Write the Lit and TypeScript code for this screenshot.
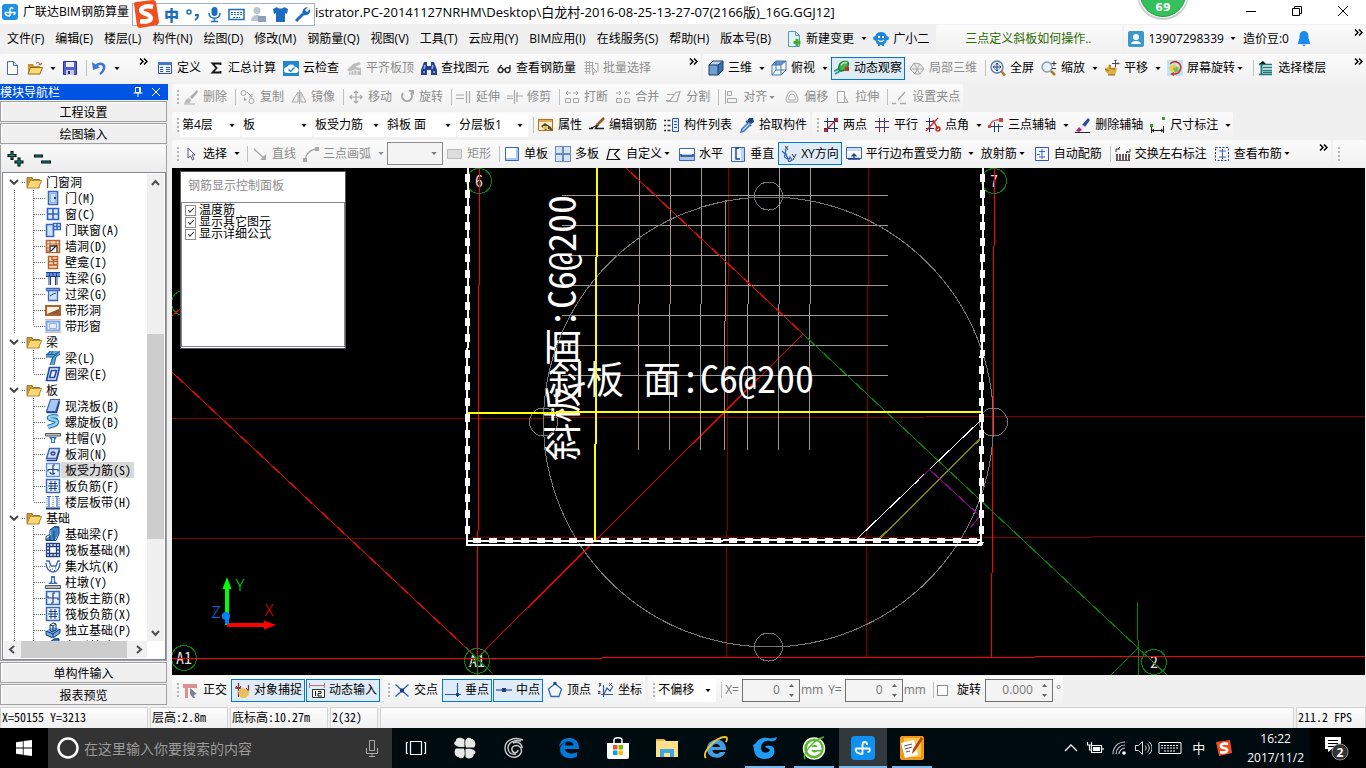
import { LitElement, html, svg, css, nothing } from "lit";
import { customElement } from "lit/decorators.js";
import { classMap } from "lit/directives/class-map.js";

const s = (d: string, c: string, w = 1, f = "none") =>
  svg`<path d=${d} stroke=${c} stroke-width=${w} fill=${f}></path>`;
const f = (d: string, c: string) => svg`<path d=${d} fill=${c}></path>`;

const G = "#a8a8a8";
const B = "#3a66b8";
const N = "#1f3f86";
const O = "#b8642c";
const L = "#cfe0fa";

const ICONS: Record<string, unknown> = {
  new: [s("M3.5 1.5h6l4 4v9h-10z", "#4a6a9a", 1, "#fff"), s("M9.5 1.5v4h4", "#4a6a9a", 1, "#dce8f8")],
  open: [f("M1 4h5l1 2h6v8H1z", "#c98f28"), f("M3 7h13l-3 7H1z", "#ffd977"), s("M1 14L3.5 7.500H15.500L13 14zM9 3.500c2-2 4-1 4.500 1.500M15 3l-1.500 2-2-1", "#8d6a24")],
  save: [s("M1.500 1.500h13v13h-13z", "#2c2c9c", 1, "#5560d0"), f("M4 2h8v5H4z", "#eef"), f("M4 10h8v5H4z", "#c8c8d8"), f("M6 11h2v3H6z", "#2c2c9c")],
  undo: [s("M5 5.500c4-3.500 9-1.500 8 3-.5 2.500-2 4-4 5.500", "#3a78d8", 2.500), f("M1 2l1 8 7-2.500z", "#3a78d8")],
  define: [s("M1.500 2.500h13v11h-13z", "#3a5a8a", 1, "#e6effc"), f("M1 2h14v3H1z", "#4a78c8"), s("M3 7.500h3M3 9.500h3M3 11.500h3M9 7.500h4M9 9.500h4M9 11.500h4", "#3a5a8a")],
  sigma: [s("M12.500 5V3.500h-8L8.500 8l-4 4.500h8V11", "#111", 1.800)],
  cloud: [f("M0 1h16v15H0z", "#1e88d0"), f("M4 13a3 3 0 0 1 0-6 4.500 4.500 0 0 1 8 0 3 3 0 0 1 1 6z", "#fff"), s("M5.500 9.500l2 2 4-4", "#1e88d0", 1.400)],
  align: [f("M1 10l6-6 6-2 2 2-6 3 6 1v7H3v-4z", "#bcbcbc"), s("M3 12l6-2 5 1M5 15v-3M8 15v-4M11 15v-4", "#eee")],
  find: [f("M3 2h3v4h4V2h3l3 8v5h-6v-5H6v5H0v-5z", "#24418c"), s("M3 9l1-4M11 9l1-4M2 12h2M12 12h2", "#8fb0e8", 1.500)],
  glass: [s("M2 10a2.500 2.500 0 1 0 5 .1 2.500 2.500 0 1 0-5-.1M9 10a2.500 2.500 0 1 0 5 .1 2.500 2.500 0 1 0-5-.1M7 9.500h2M2.500 9l3-4M14 9V5", "#222", 1.300)],
  batch: [s("M1.500 2.500h9M1.500 5.500h9M1.500 8.500h6M1.500 11.500h6M3.500 1v13M6.500 1v13M9.500 2v5", G), s("M9 7l5 5h-3l-1 3zM12 3.500h3v8", G)],
  cube: [f("M1 5h9v10H1z", "#6f9fd0"), f("M1 5l4-4h10l-5 4z", "#b8d4f0"), f("M10 5l5-4v9l-5 5z", "#3f6fa8"), s("M1 5h9v10H1zL5 1h10v9l-5 5M10 5l5-4", "#1d3c66")],
  topview: [f("M1 5h9v10H1z", "#eef5ff"), f("M1 5l4-4h10l-5 4z", "#5c94d0"), s("M1 5h9v10H1zL5 1h10v9l-5 5M10 5l5-4M5 1v9l-4 5M5 10h10", "#4a78b0")],
  orbit: [s("M0 11l7-3M1 14l7-4", "#2aa0a0", 2), s("M5 6c1-5 9-6 9.500-3s-3 8-7 8-3-3-2.500-5z", "#1d7a2a", 1.300, "#45b050"), s("M7 5c2-3 5-3 6-2", "#c0f0c0", 1.500), f("M11 7h4v4h-4z", "#c03020")],
  part3d: [s("M1 9l4-6 6 1 4 5-4 5H6zM5 3l3 6-2 5M11 4L8 9l3 5M1 9h14", G, 1, "#ececec")],
  full: [s("M1 7a6 6 0 1 0 12 0A6 6 0 1 0 1 7", "#5a7aa8", 1.300, "#e8f2ff"), s("M7 3v8M3 7h8M5.500 4.500L7 3l1.500 1.500M5.500 9.500L7 11l1.500-1.500M4.500 5.500L3 7l1.500 1.500M9.500 5.500L11 7 9.500 8.500", "#1f3f86"), s("M11.500 11.500l3.500 4", "#b07830", 2.500)],
  zoom: [s("M1 7a5 5 0 1 0 10 0A5 5 0 1 0 1 7", "#8898a8", 1.300, "#e8f2ff"), s("M10 11l4 4", "#b07830", 2.500), s("M13 1v5M10.500 3.500h5M11 8.500h4", "#333")],
  pan: [f("M1 8l3-1 1-3 2 1v3l5-1 1 2-2 6H5l-4-4z", "#e0b048"), s("M4 15h7M1 9l4 2M6 5v4M8 8v2M10 8v2", "#8a6018"), s("M11.500 0v7M8 3.500h7M10.500 1l1-1 1 1M14 2.500l1 1-1 1", "#445")],
  rot: [f("M0 0h16v16H0z", "#bfe4f4"), f("M2 7l5-3 5 4-3 4-6-1z", "#e8d048"), f("M6 8l5-1 1 4-4 2z", "#7ab858"), s("M3 4c5-5 12-1 10.500 5-1 4-4 5.500-7.500 5", "#d03028", 1.500), f("M7 12v4l-4-2z", "#d03028")],
  floor: [f("M5 1l3 3H1z", "#111"), s("M1 4.500h13M5 7.500h9M5 10.500h9M1 14.500h13M5 12.500h9", "#1a7a7a", 1.500), s("M3.500 5v9", "#1a7a7a", 2)],
  brush: [f("M14 1l1 2-6 7-2-2z", G), f("M2 13c1-4 4-5 6-2 0 3-3 4-7 3z", "#bbb"), s("M1 15h11", G)],
  copy: [s("M1 4a2.500 2.500 0 1 0 5 0 2.500 2.500 0 1 0-5 0M9 12a2.500 2.500 0 1 0 5 0 2.500 2.500 0 1 0-5 0M7 3l5 5M12 5v3H9", G), f("M4 8l3 3-3 1z", G)],
  mirror: [s("M7 3v10H1zM8.500 1v14M10 3v10h5z", G)],
  move: [s("M8 2v12M2 8h12M6 4l2-2 2 2M6 12l2 2 2-2M4 6L2 8l2 2M12 6l2 2-2 2", G, 1.200)],
  rotate: [s("M4 4a5 5 0 1 0 8 0", G, 2), f("M9 1h6v5z", G)],
  extend: [s("M0 6h8M0 9.500h8", G), s("M10.500 2v12M13.500 2v12", G, 1.200)],
  trim: [s("M0 7h6M0 9.500h6M9 7h7M7.500 1v14M10 3v10", G, 1.200)],
  breakk: [s("M1.500 9.500h5v4h-5zM9.500 9.500h5v4h-5zM7 4H2l2-2M2 4l2 2M9 4h5l-2-2M14 4l-2 2", G)],
  merge: [s("M1.500 9.500h5v4h-5zM9.500 9.500h5v4h-5zM1 4h5L4 2M6 4L4 6M15 4h-5l2-2M10 4l2 2", G)],
  split: [s("M1 5.500h8M0 11.500h4l6-8 4-1-3 10H2z", G, 1.200)],
  alignl: [s("M2.500 1v14M4.500 2.500h4v4h-4zM4.500 9.500h9v4h-9z", G)],
  offset: [s("M8 2c5 0 7 10 5 11H3C1 12 3 2 8 2zM8 5c3 0 4 5 3 6H5c-1-1 0-6 3-6z", G)],
  stretch: [s("M2.500 2.500h7v11h-7zM9 6l4 7.500H7", G)],
  grip: [s("M0 14.500h4M8 14.500h6M6 11l7-8", G, 1.500)],
  prop: [f("M0 2h15v5H0z", "#d8892c"), s("M.5 2.500h14v11H.5z", "#b87018", 1, "#fdf2d8"), f("M1 3h13v2H1z", "#e8a850"), f("M3 9l4-3 6 4 2 4-5-2-3 1z", "#5a4a20"), f("M5 9h5v3H5z", "#e0c060")],
  editbar: [s("M0 11.500h4M7 11.500h8", "#222", 1.500), s("M2 11c3 0 6-4 7-3l-3 4", "#222", 1.300), s("M8 8l7-7", "#8a5a2a", 2.500)],
  list: [s("M0 3.500h2M0 8.500h2M0 13.500h2M3.500 3.500h3M3.500 8.500h3M3.500 13.500h3", "#333", 1.500), s("M8.500 1.500h6v13h-6z", "#2c56b0", 1, "#e4eefc"), s("M10 4.500h3M10 7.500h3M10 10.500h3", "#2c56b0")],
  pick: [f("M10 1l4 0 1 4-3 2-4-3z", "#1f3f86"), s("M7 4l5 5", "#1f3f86", 1.500), s("M9 6L3 12l-1 3 3-1 6-6", "#3a78c8", 1.500, "#cfe8ff")],
  twopt: [s("M1 4.500h14M1 11.500h14M4.500 1v14M11.500 1v14", "#1f2f66"), s("M2 14L14 2", "#b8282c", 1.300), f("M1 12h3v3H1zM12 1h3v3h-3z", "#b8282c")],
  para: [s("M1 4.500h14M1 10.500h14", "#1f3f86"), s("M5.500 1v14M10.500 1v14", "#7a2c3c")],
  ptang: [s("M1 4.500h9M1 11.500h8M4.500 1v14", "#1f2f66"), s("M1 14L13 1", "#c8282c", 1.300), s("M8 3l5 9M11 12a2 2 0 1 0 4 0 2 2 0 1 0-4 0", "#c8282c", 1.500)],
  arcax: [s("M1 9.500h14M6.500 5v10M10.500 7v8", "#1f3f66"), s("M2 10c0-5 4-8 10-7", "#c84848", 1.300), f("M11 1h4v4h-4zM0 8h3v3H0z", "#c84848")],
  erase: [f("M13 1l2 2-5 7-3-2z", "#2c4a9a"), f("M8 8l2 2-4 4-3-3z", "#e8e8f0"), f("M4 10l3 3-3 2-3-1z", "#b02878"), s("M0 15.500h15", "#222")],
  dim: [f("M12 0h3v3h-3zM0 7h3v3H0z", "#30a030"), s("M1.500 10v6M13.500 9v7M2 13.500h11M4 12l-2 1.500L4 15M11 12l2 1.500-2 1.500", "#222")],
  cursor: [s("M5 2v10l2.500-2 2 4 1.500-1-2-4h3z", "#4a5a78", 1, "#fff")],
  line: [s("M2 3l11 10", G, 1.300), f("M14 8v6H8z", G)],
  arc: [s("M2 14C3 8 6 4 13 3", G, 1.300), f("M12 1h4v4h-4zM0 12h4v4H0z", G)],
  rect: [s("M.5 3.500h14v9H.5z", "#bbb", 1, "#ddd")],
  slab1: [s("M1.500 1.500h13v13h-13z", B, 1, "#fff"), f("M2 12h12v2H2zM12 2h2v12h-2z", "#a8c8f4")],
  slab4: [f("M0 0h16v16H0z", "#6a88b8"), f("M1 1h6v6H1zM9 1h6v6H9zM1 9h6v6H1zM9 9h6v6H9z", "#d4e4f8")],
  custom: [s("M1 13.500L3.500 3.500h9.500L8.500 8l5 5.500z", "#111", 1.200)],
  horiz: [s("M.5 2.500h15v12H.5z", B, 1, "#a8c8f0"), f("M1 3h14v5H1z", "#fff"), s("M2 8v2h4M14 8v2h-4M6 10h4", N, 1.300)],
  vert: [s("M1.500 1.500h13v14h-13z", B, 1, "#eef4ff"), s("M9 2H6v11h4", N, 1.400), f("M11 2h3v13h-3z", "#b8d4f8")],
  xy: [s("M1 5l3 3 1-4M5 8c-3 2-1 5 3 5l1-2 2 3-3 2z", B, 1.300), s("M4 0l3 4M7 0L4 4M11 8l2 3M15 8l-3 6", "#333")],
  edge: [s("M.5 1.500h15v11H.5z", B, 1, "#c8dcf8"), f("M1 5h14v6H1z", "#fff"), s("M2 13h12M8 13V8M5.500 10.500L8 8l2.500 2.500", N, 1.300)],
  auto: [s("M1.500 1.500h13v13h-13z", "#3a50c0", 1, "#f4f8ff"), s("M8 3v10M5 5.500h6M5 11h6M3 8.500h3", "#3a66d0")],
  swap: [s("M1 6V3h4M15 3v3h-4M3 3l2-2M13 5l-2 2", "#333"), f("M1 8h14v7H1z", "#6b5a5a"), s("M3.500 8v6M6.500 8v6M9.500 8v6M12.500 8v6", "#fff")],
  viewbar: [svg`<rect x="1.500" y="1.500" width="13" height="13" fill="none" stroke="#223a80" stroke-dasharray="2 1.500"></rect>`, s("M8.500 3v10M5 5h7M5 11h7", B)],
  doc: [s("M2.500.5h7l4 4v11h-11z", "#5a9ab8", 1, "#e0f4fa"), s("M9.500.5v4h4", "#5a9ab8"), s("M11 8v7M7.500 11.500h7", "#4aa828", 3)],
  bot: [f("M8 1c3 0 5 1 5.500 4L16 6l-.5 3-2 .5C13 12 12 13 11 13v2H9v-1H7v1H5v-2c-1 0-2-1-2.500-3.500l-2-.5L0 6l2.500-1C3 2 5 1 8 1z", "#1e88d8"), f("M5 5h2v2H5zM9 5h2v2H9z", "#fff"), s("M5 9c2 2 4 2 6 0", "#e0f4ff", 1.200)],
  user: [f("M0 2q0-2 2-2h12q2 0 2 2v12q0 2-2 2H2q-2 0-2-2z", "#3c98c8"), f("M5 6a3 3 0 1 1 6 0 3 3 0 1 1-6 0M3 13c0-4 10-4 10 0z", "#fff")],
  bell: [f("M8 0c4 0 4.500 3 4.500 7l1.500 5v1H2v-1l1.500-5c0-4 .5-7 4.500-7zM6 13.500h4l-2 2z", "#1e8af0")],
  logo: [svg`<rect width="16" height="16" rx="3" fill="#1e90ea"></rect>`, s("M11 5c-.5-2-3-1.500-3 .5V12M3 8.500h10c0 1.500-.5 2-1.500 2M3 8.500c0 2.500 2 3.500 5 3.500", "#fff", 1.400)],
  ortho: [f("M0 2h14v4H5v10H2V6H0z", "#dc9090"), f("M7 6l7 6-3 1 1 3-2 0-3-4z", "#7a8498")],
  snap: [s("M1 6h6M4.500 1v14M14.500 3v6", "#8a2c2c", 1.300), f("M4 9l4-3 7 2v5l-4 3H7l-2-3z", "#e8c060"), s("M2 4l2.500 3L7 4M12 6l2.500 3", "#8a2c2c")],
  dyn: [s("M0 3.500h16M.5 1v5M15.500 1v5", "#c07070"), s("M3.500 7.500h12v8h-12z", "#333", 1, "#f8f8f8"), s("M6.500 9v5M9 9.500h3v2H9v2.500h4", "#111")],
  cross: [s("M1.500 2.500l13 12M14.500 2.500l-13 12", "#2a6ab8", 1.400), f("M6 6.500h4v4H6z", N)],
  perp: [s("M0 12.500h16M12.500 1v14", "#2a5aa8", 1.200), f("M11 11h3v3h-3z", N)],
  mid: [s("M0 8h16", "#4a6ab8", 1.500), f("M6 6h4v4H6z", N)],
  vertex: [s("M8 1.500l6.500 5.500-2.500 7.500H4L1.500 7z", "#2a6ab8", 1.300), f("M6.500 0h3v3h-3z", N)],
  coord: [s("M5.500 3v12M3 12.500h12M6 12l3-6 3 3 3-5", "#2a5aa8", 1.200), s("M1 1l2 3M3 1L1 5M11 1l3 3M14 1l-3 3M0 9.500h2v2H0z", "#445")],
  folder: [f("M1 3h5l1 2h7v9H1z", "#c8983a"), f("M4 6h12l-3 8H1z", "#ffd873"), s("M1 13.500V3.500h5l1 2h6.500", "#9a7830"), s("M4 6.500h11.500l-3 7.500H1z", "#b08a38")],
  door: [s("M3.500 1.500h9v13h-9z", B, 1.600, L), s("M5.500 3.500h5v9h-5z", "#8fb4ec"), f("M9 7h2v2H9z", N)],
  win: [s("M2.500 2.500h11v11h-11zM8 3v10M3 8h10", "#2f62c4", 1.600, "#dbe9ff")],
  dw: [s("M1.500 2.500h7v12h-7z", B, 1.600, L), s("M8.500 1.500h7v6h-7zM12 2v5M9 4.500h6", "#2f62c4", 1.400, "#fff")],
  hole: [s("M1.500 2.500h13v12h-13z", O, 1.600, "#f6dfc6"), s("M1 6h14M5 2v4M11 2v4M2 10h2M2 13h2", O), s("M5 14V8h7v6M6 13l6-6", "#3a2a20", 1.300, "#fff")],
  niche: [s("M3.500 2.500h9v3h-4v5h4v4h-9zM12.500 5v6M4 7.500h8M4 11h8M7 3v3", O, 1.500, "#f6dfc6")],
  beamc: [f("M1 2h14v5H1z", "#5d8fe0"), s("M1 2.500h14M1 6.500h14M4 7v8M12 7v8M5.500 7v8M10.500 7v8M4.500 3v3M8 3v3M11.500 3v3", N)],
  lintel: [f("M1 2h14v3H1z", "#5d8fe0"), s("M1.500 2.500h13v2h-13zM3.500 5v9.500h9V5", B, 1.300, L), s("M5 10l3-2 3-1", N)],
  strip1: [f("M0 3h16v11H0z", "#b06028"), f("M2 5h12v7H2z", "#fbf0e4"), f("M2 12l12-5v5z", "#8a5a34")],
  strip2: [s("M0 1.500h16M0 14.500h16", "#f0b0a0"), s("M1.500 3.500h13v9h-13z", "#7fa4e4", 2, "#e4eeff"), s("M4.500 5.500h7v5h-7z", "#8fb0e8")],
  beam: [f("M1 4l4-3h10v3l-4 3-2 8H5l2-8H1z", "#58a8dc"), s("M1 4.500h9l5-3M1 7h7l4-3M5 15l3-8M9 15l2-8 4-3M3 4l2-3M6 4l2-3", "#1f5c98")],
  ring: [s("M4.500 1.500h10l-3 13h-10zM6.500 4.500h5l-2 7h-5z", "#1f4aa8", 1.600, "#e8f0ff")],
  slab: [s("M5.500 1.500h9l-4 12h-9z", B, 1.200, "#a9c8f5"), s("M1.500 14.500h10l3-11", N, 1.500)],
  spiral: [s("M13 3c-4-1-9-1-9 1s8 1 8 4-4 3-9 5", "#1f6cb0", 4.500), s("M13 3c-4-1-9-1-9 1s8 1 8 4-4 3-9 5", "#8fd4f4", 2.500)],
  cap: [s("M.5 3.500h15v2.500H.5z", "#555", 1, "#bbb"), f("M4 7h8l-2 3v3H6v-3z", "#3a6cc8"), f("M7 8h2v4H7z", "#cfe0fa")],
  shole: [s("M4.500 2.500h10l-3 10h-10z", B, 1.400, L), s("M6 7.500c0-2 4-2 4 0s-4 2-4 0M1.500 14.500h10l3-10", N, 1.300)],
  rebar: [s("M1.500 1.500h13v13h-13z", "#6a92d8", 1.400, "#e6f0ff"), s("M8 3v9M3 7.500h10v2M3 7.500v2M5 10c0 2 3 3 5 1M8 3h2", "#1f4488", 1.200)],
  rebar2: [s("M1.500 1.500h13v13h-13z", B, 1.400, "#e6f0ff"), s("M6 3v10M10 3v10M3 8h10M4 5.500h8M4 10.500h8", "#1f4488")],
  band: [s("M1 14.500h14", N, 2), s("M2 2.500h4M10 2.500h4M4 3v10M12 3v10", "#3a6cc8", 1.200), svg`<path d="M2 4v9M8 2v11M14 4v9" stroke="#3a6cc8" stroke-dasharray="1 1"></path>`],
  fbeam: [f("M1 13l5-4V3l4-3h4v7l-4 7H1z", "#3a86c8"), s("M1 14.500v-4l4-2V4l4-3h5v7l-3 6.500zM9 5v9M5 9v5", "#123c74")],
  raft: [s("M1.500 1.500h13v13h-13zM4.500 1v14M11.500 1v14M1 4.500h14M1 11.500h14M8 1v3M8 12v3M1 8h3M12 8h3", N, 1.300)],
  pit: [s("M1 3h3l2 5h5l2-5h2", B, 1.400), s("M1 5c0 5 3 9 7 9s7-4 7-9", B, 1.400), s("M4 9h1M7 11h1M10 10h1M5 12h1M9 12.500h1", N)],
  pier: [s("M.5 11.500h15v3H.5z", "#555", 1, "#bbb"), f("M3 10l3-3V2h4v5l3 3z", "#3a6cc8"), f("M7 4h2v5H7z", "#cfe0fa")],
  rmain: [s("M1.500 1.500h13v13h-13z", B, 1.600, "#e6f0ff"), s("M8 3v10M3 8h10M3 6v2M13 8v2M8 3h2M8 13H6", N, 1.200)],
  indep: [f("M1 9l7-4 7 2v4l-7 5-7-3z", "#78a8d8"), s("M1 9l7 3 7-5M8 12v3M1 9v4l7 3 7-5V7M5 8V3l3-2 3 1v6l-4 2zM5 3l3 1v5M8 4l3-2", "#123c74")],
};

const icon = (n: string) => html`<svg class="i" viewBox="0 0 16 16" aria-hidden="true">${ICONS[n]}</svg>`;

type Item = { i?: string; t?: string; off?: boolean; on?: boolean; drop?: "split" | "tight"; sep?: boolean; label?: string };
const T = (i: string, t: string, o: Partial<Item> = {}): Item => ({ i, t, ...o });
const SEP: Item = { sep: true };
const off = { off: true };

const tri = html`<svg class="tri" viewBox="0 0 7 4" aria-hidden="true"><path d="M0 0h7L3.500 4z" fill="currentColor"></path></svg>`;
const more = html`<button class="more" aria-label="更多"><svg viewBox="0 0 9 7"><path d="M1 .5l3 3-3 3M5 .5l3 3-3 3" fill="none" stroke="#000" stroke-width="1.500"></path></svg></button>`;

const item = (x: Item) =>
  x.sep
    ? html`<span class="sep"></span>`
    : html`<button class=${classMap({ tb: true, off: !!x.off, on: !!x.on })} aria-label=${x.label ?? x.t ?? ""}>
          ${x.i ? icon(x.i) : nothing}${x.t ? html`<span>${x.t}</span>` : nothing}${x.drop === "tight" ? html`<span class="tight">${tri}</span>` : nothing}</button
        >${x.drop === "split" ? html`<button class=${classMap({ arrow: true, off: !!x.off })} aria-label="展开">${tri}</button>` : nothing}`;

const combo = (label: string, v: string, cls = "") =>
  html`<label class="combo ${cls}"><select aria-label=${label}><option>${v}</option></select>${tri}</label>`;

const MENUS = ["文件(F)", "编辑(E)", "楼层(L)", "构件(N)", "绘图(D)", "修改(M)", "钢筋量(Q)", "视图(V)", "工具(T)", "云应用(Y)", "BIM应用(I)", "在线服务(S)", "帮助(H)", "版本号(B)"];

const QUICK: Item[] = [{ i: "new", label: "新建" }, { i: "open", label: "打开", drop: "split" }, { i: "save", label: "保存" }, SEP, { i: "undo", label: "撤销", drop: "split" }];
const MAIN: Item[] = [T("define", "定义"), T("sigma", "汇总计算"), T("cloud", "云检查"), T("align", "平齐板顶", off), T("find", "查找图元"), T("glass", "查看钢筋量"), T("batch", "批量选择", off)];
const VIEW: Item[] = [
  T("cube", "三维", { drop: "split" }), T("topview", "俯视", { drop: "split" }), T("orbit", "动态观察", { on: true }), T("part3d", "局部三维", off), SEP,
  T("full", "全屏"), T("zoom", "缩放", { drop: "split" }), T("pan", "平移", { drop: "split" }), T("rot", "屏幕旋转", { drop: "tight" }), SEP, T("floor", "选择楼层"),
];
const EDIT: Item[] = [
  T("brush", "删除", off), SEP, T("copy", "复制", off), T("mirror", "镜像", off), SEP, T("move", "移动", off), T("rotate", "旋转", off), SEP,
  T("extend", "延伸", off), T("trim", "修剪", off), SEP, T("breakk", "打断", off), T("merge", "合并", off), T("split", "分割", off), SEP,
  T("alignl", "对齐", { off: true, drop: "tight" }), T("offset", "偏移", off), T("stretch", "拉伸", off), SEP, T("grip", "设置夹点", off),
];
const COMP: Item[] = [SEP, T("prop", "属性"), T("editbar", "编辑钢筋"), T("list", "构件列表"), T("pick", "拾取构件")];
const AXIS: Item[] = [
  T("twopt", "两点"), T("para", "平行"), T("ptang", "点角", { drop: "split" }), T("arcax", "三点辅轴", { drop: "split" }), T("erase", "删除辅轴"), T("dim", "尺寸标注", { drop: "split" }),
];
const DRAW1: Item[] = [T("cursor", "选择", { drop: "split" }), SEP, T("line", "直线", off), T("arc", "三点画弧", { off: true, drop: "split" })];
const DRAW2: Item[] = [
  T("rect", "矩形", off), SEP, T("slab1", "单板"), T("slab4", "多板"), T("custom", "自定义", { drop: "tight" }), T("horiz", "水平"), T("vert", "垂直"),
  T("xy", "XY方向", { on: true }), T("edge", "平行边布置受力筋", { drop: "split" }), { t: "放射筋", drop: "tight" }, T("auto", "自动配筋"), SEP,
  T("swap", "交换左右标注"), T("viewbar", "查看布筋", { drop: "tight" }),
];
const SNAP1: Item[] = [T("ortho", "正交"), T("snap", "对象捕捉", { on: true }), T("dyn", "动态输入", { on: true })];
const SNAP2: Item[] = [T("cross", "交点"), T("perp", "垂点", { on: true }), T("mid", "中点", { on: true }), T("vertex", "顶点"), T("coord", "坐标")];

const TREE: [string, [string, string][]][] = [
  ["门窗洞", [["door", "门(M)"], ["win", "窗(C)"], ["dw", "门联窗(A)"], ["hole", "墙洞(D)"], ["niche", "壁龛(I)"], ["beamc", "连梁(G)"], ["lintel", "过梁(G)"], ["strip1", "带形洞"], ["strip2", "带形窗"]]],
  ["梁", [["beam", "梁(L)"], ["ring", "圈梁(E)"]]],
  ["板", [["slab", "现浇板(B)"], ["spiral", "螺旋板(B)"], ["cap", "柱帽(V)"], ["shole", "板洞(N)"], ["rebar", "板受力筋(S)"], ["rebar2", "板负筋(F)"], ["band", "楼层板带(H)"]]],
  ["基础", [["fbeam", "基础梁(F)"], ["raft", "筏板基础(M)"], ["pit", "集水坑(K)"], ["pier", "柱墩(Y)"], ["rmain", "筏板主筋(R)"], ["rebar2", "筏板负筋(X)"], ["indep", "独立基础(P)"], ["fbeam", "条形基础(T)"]]],
];

const dots = (d: string) => svg`<path d=${d} fill="none" stroke="#666" stroke-dasharray="1 1"></path>`;

@customElement("cad-canvas")
class CadCanvas extends LitElement {
  static styles = css`
    :host { display: block; background: #000; overflow: hidden; }
    svg { display: block; width: 100%; height: 100%; }
    .note { font-family: "Noto Sans Mono CJK SC", "Noto Sans CJK SC", sans-serif; font-size: 38px; fill: #fff; white-space: pre; }
    .ax { font-family: "Noto Sans Mono CJK SC", "Liberation Mono", monospace; font-size: 16px; fill: #ddd; text-anchor: middle; }
    .uc { font-family: "Open Sans", sans-serif; font-weight: 300; font-size: 16px; text-anchor: middle; }
  `;
  private l(x1: number, y1: number, x2: number, y2: number, c: string, w = 1) {
    return svg`<line x1=${x1} y1=${y1} x2=${x2} y2=${y2} stroke=${c} stroke-width=${w}></line>`;
  }
  render() {
    const wire = "#a09890";
    const l = this.l;
    const bubble = (x: number, y: number, t: string) => svg`
      <circle cx=${x} cy=${y} r="12.500" fill="none" stroke="#008a00"></circle>
      <text class="ax" x=${x} y=${y + 6}>${t}</text>`;
    const vbar = (x1: number, x2: number, y2: number) => svg`
      ${l(x1, 166, x2, y2, "#fff", 2)}
      <line x1=${x1} y1="174" x2=${x2} y2=${y2} stroke="#fff" stroke-width="5" stroke-dasharray="8 8"></line>`;
    return html`<svg aria-label="绘图区">
      <g transform="translate(-172 -168)" shape-rendering="crispEdges">
        ${l(172, 418.5, 925, 417.5, "#800000")}${l(925, 416.5, 1400, 416.5, "#800000")}
        ${l(172, 538.5, 1400, 536.5, "#800000")}
        ${l(728.5, 168, 726.5, 657, "#800000")}${l(868.5, 168, 866.5, 657, "#800000")}
        ${bubble(479, 181, "6")}${bubble(994, 181, "7")}${bubble(184, 658, "A1")}${bubble(477, 661, "A1")}${bubble(1154, 662, "2")}
        <circle cx="184" cy="303" r="12.500" fill="none" stroke="#008a00"></circle>
        ${l(172, 316, 181, 308, "#f00")}
        ${l(479.5, 168, 477.5, 657, "#f00")}${l(994.5, 168, 991.5, 657, "#f00")}
        ${l(172, 658.5, 1035, 657.5, "#f00")}${l(1035, 656.5, 1400, 656.5, "#f00")}
        ${l(172, 372, 477, 658, "#f00")}${l(477, 658, 803, 334, "#f00")}
        ${l(468, 667, 486, 650, "#008a00")}${l(464, 646, 492, 673, "#008a00")}${l(477.5, 658, 477.5, 676, "#008a00")}
        ${[639.5, 670.5, 701.5, 748.5, 779.5, 810.5].map((x) => l(x, 168, x - 1, 450, wire))}
        ${l(725.5, 200, 724.5, 450, wire)}
        ${[195, 225, 255, 285, 315, 345, 375].map((y) => l(562, y + 0.5, 888, y + 0.5, wire))}
        <text class="note" x="548" y="393">斜板 面:C6@200</text>
        <text class="note" transform="translate(576 461) rotate(-90)">斜板 面:C6@200</text>
        ${l(626, 168, 803, 334, "#f00")}
        ${l(803, 334, 1168, 676, "#008a00")}
        ${l(1137.5, 602, 1138.5, 676, "#008a00")}${l(1138, 648, 1110, 676, "#008a00")}
        <g fill="none" stroke="#777">
          <circle cx="768.500" cy="422" r="225"></circle>
          <circle cx="768.500" cy="196" r="14"></circle><circle cx="993.500" cy="422" r="14"></circle>
          <circle cx="543.500" cy="422" r="14"></circle><circle cx="768.500" cy="647" r="14"></circle>
        </g>
        ${l(597, 168, 595, 541, "#ff0", 2)}
        ${l(468, 413, 556, 413, "#ff0", 2)}${l(556, 412, 981, 412, "#ff0", 2)}
        ${l(858, 538, 980, 421, "#fff")}${l(878, 540, 980, 439, "#888800", 1.5)}
        <path d="M919 480l10.500-10.500L980 516l-10 12" fill="none" stroke="#a000a0"></path>
        ${vbar(468, 467, 542)}${vbar(983, 981, 545)}
        ${l(467, 541, 981, 540, "#fff", 2)}
        <line x1="473" y1="540.500" x2="981" y2="540" stroke="#fff" stroke-width="5" stroke-dasharray="8 8"></line>
        ${l(467, 545, 982, 545, "#fff", 2)}${l(467, 540, 467, 546, "#fff", 2)}
      </g>
      <g transform="translate(-172 -168)">
        <path d="M227 625V586" stroke="#0f0" stroke-width="4"></path><path d="M227 577l4.500 12h-9z" fill="#0f0"></path>
        <path d="M227 625h40" stroke="#f00" stroke-width="4"></path><path d="M276 625l-12 4.500v-9z" fill="#f00"></path>
        <circle cx="226" cy="616" r="4" fill="#0080ff"></circle><path d="M227 616v8" stroke="#0080ff" stroke-width="4"></path>
        <text class="uc" x="240" y="591" fill="#0f0">Y</text>
        <text class="uc" x="269" y="616" fill="#f00">X</text>
        <text class="uc" x="216" y="618" fill="#0080ff">Z</text>
      </g>
    </svg>`;
  }
}

@customElement("module-nav")
class ModuleNav extends LitElement {
  static styles = css`
    :host { display: flex; flex-direction: column; gap: 1px; padding: 1px 0 2px; box-sizing: border-box; min-height: 0; font: 12px/16px "Noto Sans Mono CJK SC", "Noto Sans CJK SC", sans-serif; color: #000; background: #f0f0f0; }
    button { font: inherit; color: inherit; padding: 0; border: 0; background: none; }
    .head { display: flex; align-items: center; background: #0054e3; color: #fff; height: 16px; flex: none; }
    .head span { flex: 1; }
    .head svg { width: 12px; height: 12px; display: block; margin-right: 6px; }
    .page { height: 21px; flex: none; margin-right: 1px; border: 1px solid #a0a0a0; background: #f0f0f0; box-shadow: inset 1px 1px #fff; text-align: center; line-height: 18px; }
    .body { flex: 1; min-height: 0; display: flex; flex-direction: column; margin-right: 1px; border: 1px solid #a0a0a0; border-top: 0; }
    .tools { display: flex; gap: 10px; height: 27px; align-items: center; padding-left: 6px; background: linear-gradient(#fafafa, #ececec); flex: none; }
    .tools svg { width: 17px; height: 16px; display: block; }
    .box { flex: 1; min-height: 0; display: grid; grid-template: minmax(0, 1fr) 17px / minmax(0, 1fr) 17px; margin: 0 0 0 1px; border: 1px solid #828790; background: #fff; padding: 1px; }
    ul { list-style: none; margin: 0; padding: 0; overflow: hidden; }
    li { display: flex; height: 16px; align-items: center; white-space: nowrap; }
    .i { width: 16px; height: 16px; flex: none; display: block; }
    .ind { height: 16px; flex: none; display: block; }
    .p .ind { width: 22px; }
    .c .ind { width: 41px; }
    .t { padding: 0 3px 0 4px; line-height: 16px; }
    .sel .t { background: #d9d9d9; }
    .vs, .hs { display: flex; background: #f0f0f0; }
    .vs { flex-direction: column; }
    .vs svg, .hs svg { width: 17px; height: 17px; flex: none; }
    .a1 { flex: 143; } .th1 { flex: 206; background: #cdcdcd; } .b1 { flex: 85; }
    .th2 { flex: 105; background: #cdcdcd; } .b2 { flex: 3; }
    .corner { background: #fff; }
  `;
  render() {
    const chev = (d: string) => html`<svg viewBox="0 0 17 17"><path d=${d} fill="none" stroke="#505050" stroke-width="2"></path></svg>`;
    return html`
      <div class="head"><span>模块导航栏</span>
        <svg viewBox="0 0 12 12"><path d="M3.500 1.500h5v5h-5zM7.500 2v4M1.500 7h9M6 7v4" fill="none" stroke="#fff"></path></svg>
        <svg viewBox="0 0 12 12"><path d="M2 2l8 8M10 2l-8 8" stroke="#fff"></path></svg>
      </div>
      <button class="page">工程设置</button>
      <button class="page">绘图输入</button>
      <div class="body">
        <div class="tools">
          <svg viewBox="0 0 17 16"><path d="M5 0v9M.5 4.500h9M12 6.500v9M7.500 11h9" stroke="#000" stroke-width="3"></path><path d="M5 1v7M1.500 4.500h7M12 7.500v7M8.500 11h7" stroke="#00a8a0"></path></svg>
          <svg viewBox="0 0 17 16"><path d="M0 5h9M7 11h10" stroke="#000" stroke-width="3"></path><path d="M1 5h7M8 11h8" stroke="#00a8a0"></path></svg>
        </div>
        <div class="box">
          <ul>
            ${TREE.map(([name, kids]) => html`
              <li class="p">
                <svg class="ind" viewBox="0 0 22 16"><path d="M6 6l4 4 4-4" fill="none" stroke="#404040" stroke-width="1.800"></path>${dots("M18 8.500h4")}</svg>
                ${icon("folder")}<span class="t">${name}</span>
              </li>
              ${kids.map(([ic, t], ki) => html`
                <li class=${classMap({ c: true, sel: ic === "rebar" })}>
                  <svg class="ind" viewBox="0 0 41 16">${dots("M10.500 0v16")}${dots(ki === kids.length - 1 ? "M29.500 0v8" : "M29.500 0v16")}${dots("M30 8.500h11")}</svg>
                  ${icon(ic)}<span class="t">${t}</span>
                </li>`)}
            `)}
          </ul>
          <div class="vs">${chev("M5 11l3.500-4L12 11")}<span class="a1"></span><span class="th1"></span><span class="b1"></span>${chev("M5 7l3.500 4L12 7")}</div>
          <div class="hs">${chev("M10 5L6 8.500l4 3.500")}<span class="th2"></span><span class="b2"></span>${chev("M7 5l4 3.500L7 12")}</div>
          <span class="corner"></span>
        </div>
      </div>
      <button class="page">单构件输入</button>
      <button class="page">报表预览</button>`;
  }
}

@customElement("task-bar")
class TaskBar extends LitElement {
  static styles = css`
    :host { display: flex; height: 40px; flex: none; background: #000b10; color: #fff; font: 12px/16px "Open Sans", "Noto Sans CJK SC", sans-serif; }
    button { border: 0; background: none; padding: 0; color: inherit; font: inherit; display: grid; place-items: center; }
    svg { display: block; }
    .start, .app { width: 48px; height: 40px; }
    .start { background: #000; }
    .start svg { width: 16px; height: 16px; }
    .search { width: 344px; background: #333; display: flex; align-items: center; padding: 0 12px 0 8px; box-sizing: border-box; gap: 4px; }
    .search svg { width: 24px; height: 24px; flex: none; }
    .search .mic { width: 16px; height: 20px; }
    .search input { flex: 1; min-width: 0; border: 0; outline: 0; background: none; padding: 0; color: #ccc; font: 14px/20px "Noto Sans CJK SC", sans-serif; }
    .search input::placeholder { color: #9a9a9a; opacity: 1; }
    .apps { display: flex; gap: 1px; flex: 1; }
    .apps svg { width: 24px; height: 24px; }
    .gap { margin-left: 6px; }
    .run { box-shadow: inset 0 -2px #76b9ed; width: 40px; margin: 0 4px; }
    .run.act { background: #32393d; width: 48px; margin: 0; }
    .tray { display: flex; align-items: center; gap: 6px; }
    .tray svg { width: 18px; height: 18px; }
    .tray .kb { width: 24px; height: 18px; }
    .ime { font-size: 13px; padding: 0 4px; }
    .clock { text-align: center; line-height: 19px; margin-left: 8px; }
    .note { width: 56px; height: 40px; background: #000; border-right: 4px solid #000; box-sizing: border-box; }
    .note svg { width: 28px; height: 28px; }
  `;
  render() {
    const app = (label: string, body: unknown, cls = "") => html`<button class="app ${cls}" aria-label=${label}><svg viewBox="0 0 24 24">${body}</svg></button>`;
    return html`
      <button class="start" aria-label="开始"><svg viewBox="0 0 16 16"><path d="M0 2.200L6.800 1.200V7.600H0zM7.600 1.100L16 0v7.600H7.600zM0 8.400h6.800v6.400L0 13.800zM7.600 8.400H16V16l-8.400-1.100z" fill="#fff"></path></svg></button>
      <label class="search">
        <svg viewBox="0 0 24 24"><circle cx="12" cy="12" r="9.500" fill="none" stroke="#fff" stroke-width="2.500"></circle></svg>
        <input placeholder="在这里输入你要搜索的内容" aria-label="搜索" />
        <svg class="mic" viewBox="0 0 16 20"><path d="M5.500 2.500h5v10h-5zM2.500 10v5.500h11V10M8 15.500v3M5 18.500h6" fill="none" stroke="#aaa"></path></svg>
      </label>
      <div class="apps">
        ${app("任务视图", svg`<path d="M6.500 5.500h11v13h-11zM4 6.500H2.500v11H4M20 6.500h1.500v11H20" fill="none" stroke="#fff" stroke-width="1.200"></path>`)}
        ${app("工具", svg`<path d="M11.500 11V3.500C8 .5 2 1.500 3 5-.500 6.500 1 12 11.500 11zM13 11.500h8c3-3 .5-9-2.500-8.500C16 0 10 2 13 11.500zM12.500 13v8c3 3 9 1 8-2.500 4-1.500 2-6.500-8-5.500zM11 12.500H3c-3 3-.5 9 2.500 8.500C8 24 14 22 11 12.500z" fill="#e8e8e8"></path>`)}
        ${app("浏览器", svg`<path d="M21 4C11 0 3 5 3 12s6 10 11 9 7-7 4-10-9-1-8 3 6 3 6 0M19 5C12 3 6 7 6 12s4 7 8 6M11 7c4-2 9 0 9 5" fill="none" stroke="#ccc" stroke-width="1.400"></path>`)}
        ${app("Edge", svg`<path d="M2 11C3 4 8 1.500 13 2c6 .5 9 4.500 9 11H8c0 4 7 6 12 3v4.500c-7 4-17 1-17-7C3 10 6 7 9 6.500 8 8 8 9 8 9.500h8.500c0-6-10-5-14.500 1.500z" fill="#0078d7"></path>`, "gap")}
        ${app("应用商店", svg`<path d="M1 7h22v14q0 2-2 2H3q-2 0-2-2z" fill="#fff"></path><path d="M8 7V4c0-3 8-3 8 0v3" fill="none" stroke="#fff" stroke-width="1.500"></path><path d="M7 9h4.500v4.500H7z" fill="#f25022"></path><path d="M12.500 9H17v4.500h-4.500z" fill="#7fba00"></path><path d="M7 14.500h4.500V19H7z" fill="#00a4ef"></path><path d="M12.500 14.500H17V19h-4.500z" fill="#ffb900"></path>`)}
        ${app("文件资源管理器", svg`<path d="M1 3h8l2 2h12v16H1z" fill="#ffe08a"></path><path d="M1 3h8v2H1z" fill="#e8b840"></path><path d="M5 13h14v8h-4v-4H9v4H5z" fill="#38a8e0"></path>`)}
        ${app("Internet Explorer", svg`<path d="M3 13C3 7 8 3.500 13 3.500s9.500 4.500 9 10.500H8.500c0 4 5.500 5 7.500 2h5.500c-3 9-18.500 7-18.500-3zM8.500 11H16c0-4-7.500-4-7.500 0z" fill="#3f9fe0"></path><path d="M2 22C-3 17 12 1 21 1c3 0 2 3 1 5" fill="none" stroke="#f4c430" stroke-width="1.800"></path>`)}
        ${app("G浏览器", svg`<path d="M24 1c-1 4-4 5-7 4-5-1-9 2-9 7 0 4 4 6 7 4 2-1 2-2 1-3l-4-2c2-2 6-2 9 1 2 7-3 11-9 11C5 23 1 19 1 13L0 9l3-2c3-5 8-6 12-5 3 1 6 0 9-1z" fill="#1f9cf4"></path>`, "run")}
        ${app("360浏览器", svg`<circle cx="12" cy="12.500" r="10.500" fill="#58b82c" stroke="#f0fae8" stroke-width="1.500"></circle><path d="M5 13c0-5 3-8 7.500-8s7 3 7 8v1H9.500c.5 3 4.500 3 5.500 1.500h4C16 22 5 21 5 13zM9.500 11h6c-.5-3-5.500-3-6 0z" fill="#fff"></path><path d="M3 23C0 18 12 3 22 1" fill="none" stroke="#58b82c" stroke-width="1.500"></path>`, "run")}
        ${app("广联达BIM钢筋算量", svg`<rect width="24" height="24" rx="4" fill="#1090f0"></rect><path d="M16 9c0-4-4.500-4-4.500 0v9.500M4.500 12.500h14c1 2 0 3.500-2 3.500M4.500 12.500c0 4 3 5.500 7 5.500" fill="none" stroke="#fff" stroke-width="1.800"></path>`, "run act")}
        ${app("笔记", svg`<rect width="24" height="24" rx="2" fill="#f09818"></rect><path d="M4 2h17v19H4z" fill="#ffc850"></path><path d="M1 7l13-3 4 15-13 3z" fill="#fff"></path><path d="M4 10l8-2M5 13l7-2M6 16l4-1" stroke="#555"></path><path d="M21 1l2 2-8 12-3 3 1-5z" fill="#b04810"></path>`, "run")}
      </div>
      <div class="tray">
        <svg viewBox="0 0 18 18"><path d="M3 12l6-6 6 6" fill="none" stroke="#fff" stroke-width="1.300"></path></svg>
        <svg viewBox="0 0 18 18"><path d="M5.500 6.500h10v7h-10zM17 9v2M1.500 3v3h4V3M3.500 6v5h2" fill="none" stroke="#fff" stroke-width="1.200"></path><path d="M7 8h7v4H7z" fill="#fff"></path></svg>
        <svg viewBox="0 0 18 18"><path d="M3 15C3 8 8 3 15 3M6 15c0-5 4-9 9-9M9 15c0-3 3-6 6-6" fill="none" stroke="#bbb" stroke-width="1.200"></path><circle cx="14" cy="14" r="1.800" fill="#fff"></circle></svg>
        <svg viewBox="0 0 18 18"><path d="M1.500 6.500h3l4-4v13l-4-4h-3zM11 6.500c1.500 1.500 1.500 3.500 0 5M13 4.500c3 3 3 6 0 9M15 2.500c4 4 4 9 0 13" fill="none" stroke="#ddd"></path></svg>
        <svg class="kb" viewBox="0 0 24 18"><path d="M1 3.500h22v11H1z" fill="none" stroke="#fff"></path><path d="M3 6.500h18M3 9h18M6 12h12" stroke="#fff" stroke-dasharray="2 1"></path></svg>
        <span class="ime">中</span>
        <svg viewBox="0 0 18 18"><path d="M1 3l14-2 2 13-13 3z" fill="#f04a20"></path><path d="M13 5C6 3 3 8 9 9s3 6-4 4" fill="none" stroke="#fff" stroke-width="2.500"></path></svg>
        <div class="clock">16:22<br />2017/11/2</div>
        <button class="note" aria-label="通知"><svg viewBox="0 0 28 28"><path d="M3 3h16v12h-9l-4 3v-3H3z" fill="#fff"></path><path d="M6 6.500h10M6 9.500h10M6 12.500h7" stroke="#000"></path><circle cx="18" cy="18" r="8" fill="#333" stroke="#888"></circle><text x="18" y="22.500" fill="#fff" font-size="12" font-weight="700" text-anchor="middle">2</text></svg></button>
      </div>`;
  }
}

@customElement("app-root")
class AppRoot extends LitElement {
  static styles = css`
    :host { display: flex; flex-direction: column; height: 100vh; background: #f0f0f0; color: #000; font: 12px/16px "Open Sans", "Noto Sans CJK SC", sans-serif; overflow: hidden; position: relative; }
    button { font: inherit; color: inherit; border: 0; background: none; padding: 0; white-space: nowrap; }
    svg { display: block; }
    .i { width: 16px; height: 16px; flex: none; }
    .title { display: flex; height: 24px; flex: none; background: #fff; align-items: center; padding-left: 2px; white-space: nowrap; }
    .title .name { margin-left: 5px; flex: 0 0 109px; overflow: hidden; }
    .slot { flex: 0 0 183px; align-self: stretch; position: relative; }
    .title .path { flex: 1; overflow: hidden; font-size: 13px; }
    .win { width: 46px; height: 24px; display: grid; place-items: center; }
    .win svg { width: 12px; height: 12px; margin-bottom: 3px; }
    .ime { position: absolute; left: 0; top: 3px; display: flex; align-items: center; gap: 5px; height: 23px; width: 183px; background: #fff; border: 1px solid #9fb4c8; box-sizing: border-box; z-index: 2; color: #1c6cc0; font-weight: 700; padding-left: 31px; }
    .ime .s { position: absolute; left: 0; top: -4px; width: 26px; height: 28px; }
    .ime svg { width: 17px; height: 17px; flex: none; }
    .ime b { font-size: 15px; }
    .badge { position: absolute; right: 176px; top: 0; width: 54px; height: 26px; z-index: 3; }
    .badge text { font: 700 11px "DejaVu Sans", sans-serif; fill: #fff; text-anchor: middle; }
    .menu { display: flex; height: 29px; flex: none; align-items: center; padding-left: 2px; }
    .menu .m { padding: 0 5px; margin-right: 1px; }
    .band { display: flex; align-items: center; gap: 1px; align-self: stretch; margin: 1px 0; padding-left: 5px; background: linear-gradient(#fbfbfb, #f1f1f1); border-radius: 2px; flex: none; box-sizing: border-box; }
    .band.bare { padding-left: 1px; }
    .band.three { padding-left: 3px; }
    .band.two { padding-left: 2px; }
    .band.fill { flex: 1; min-width: 0; }
    .band + .band { margin-left: 2px; }
    .quick { width: 151px; }
    .band.main { width: 550px; margin-left: 0; }
    .row { display: flex; flex: none; align-items: center; }
    .apps { gap: 1px; margin: 0 4px 0 6px; }
    .r30 { height: 30px; } .r29 { height: 29px; } .r28 { height: 28px; } .r32 { height: 30px; padding-bottom: 2px; }
    .r32 .band + .band { margin-left: 3px; }
    .grip { width: 2px; height: 14px; flex: none; background: repeating-linear-gradient(#b4b4b4 0 2px, transparent 2px 4px); }
    .tb { display: flex; align-items: center; gap: 4px; height: 23px; padding: 0 2px; border: 1px solid transparent; box-sizing: border-box; flex: none; }
    .tb.on { border-color: #0078d7; background: #dfebf6; }
    .off { color: #8c8c8c; }
    .tri { width: 6px; height: 3px; flex: none; }
    .tight { width: 10px; margin-left: -4px; display: grid; place-items: center; }
    .arrow { width: 11px; height: 22px; display: grid; place-items: center; flex: none; }
    .sep { width: 1px; height: 16px; background: #c0c0c0; margin-left: 4px; flex: none; }
    .more { width: 16px; align-self: stretch; margin-left: auto; display: grid; align-content: start; justify-content: center; padding-top: 4px; }
    .more svg { width: 9px; height: 7px; }
    .end { width: 12px; flex: none; }
    .hot { color: #2a6a00; padding: 0 31px 0 28px; }
    .combo { display: grid; width: 71px; height: 23px; background: #fff; align-items: center; flex: none; }
    .combo > * { grid-area: 1 / 1; }
    .combo.short { width: 60px; }
    .combo.boxed { width: 56px; border: 1px solid #8a8a8a; box-sizing: border-box; background: #f4f4f4; color: #777; }
    .combo .tri { justify-self: end; margin-right: 5px; pointer-events: none; }
    select { appearance: none; border: 0; background: none; font: inherit; color: inherit; width: 100%; padding: 0 0 0 2px; height: 100%; outline: 0; }
    .mid { flex: 1; min-height: 0; display: grid; grid-template-columns: 168px minmax(0, 1fr); }
    .work { display: flex; flex-direction: column; min-width: 0; min-height: 0; padding-left: 4px; }
    .stage { flex: 1; min-height: 0; position: relative; display: grid; padding-right: 1px; }
    .panel { position: absolute; left: 8px; top: 3px; width: 166px; height: 178px; background: #fff; border: 1px solid #555; box-sizing: border-box; display: flex; flex-direction: column; }
    .panel h2 { margin: 0; font: 12px/26px "Noto Sans CJK SC", sans-serif; color: #8c8c8c; padding-left: 7px; height: 30px; flex: none; }
    .opts { flex: 1; border: 1px solid #828790; margin: 0 0 1px; padding: 1px 0 0 3px; }
    .opts label { display: flex; align-items: center; gap: 3px; height: 12px; line-height: 12px; white-space: nowrap; }
    input[type="checkbox"] { appearance: none; width: 11px; height: 11px; margin: 0; border: 1px solid #8c8c8c; background: #fff; flex: none; display: grid; place-items: center; box-sizing: border-box; }
    .opts input:checked::after { content: ""; width: 5px; height: 2px; border: solid #333; border-width: 0 0 1px 1px; transform: rotate(-45deg); margin-bottom: 2px; }
    .num { display: flex; align-items: center; width: 58px; height: 23px; border: 1px solid #707070; box-sizing: border-box; background: #f4f4f4; color: #777; flex: none; }
    .num.wide { width: 68px; }
    .num input { flex: 1; min-width: 0; width: 0; border: 0; background: none; text-align: right; font: inherit; color: inherit; padding: 0; outline: 0; }
    .num svg { width: 7px; height: 15px; margin: 0 4px 0 8px; flex: none; }
    .lab { color: #777; margin: 0 2px; }
    .unit { color: #777; margin-right: 2px; }
    .rot { display: flex; align-items: center; gap: 9px; margin: 0 3px 0 2px; }
    .status { display: flex; gap: 2px; height: 21px; flex: none; font: 12px/18px "Noto Sans Mono CJK SC", "Noto Sans CJK SC", monospace; white-space: nowrap; }
    .status span { border: 1px solid #d4d4d4; border-bottom: 0; padding-left: 1px; box-sizing: border-box; background: linear-gradient(#fdfdfd, #f0f0f0); }
    .w1 { flex: 0 0 148px; } .w2 { flex: 0 0 78px; } .w3 { flex: 0 0 98px; } .w4 { flex: 0 0 48px; } .w5 { flex: 1; } .w6 { flex: 0 0 70px; }
  `;

  render() {
    const spin = html`<svg viewBox="0 0 7 15" aria-hidden="true"><path d="M1 4l2.500-3L6 4zM1 11l2.500 3L6 11z" fill="#666"></path></svg>`;
    const num = (id: string, v: string, cls = "") => html`<span class="num ${cls}"><input id=${id} .value=${v} aria-label=${id} />${spin}</span>`;
    const check = (t: string) => html`<label><input type="checkbox" checked />${t}</label>`;
    const grip = html`<span class="grip"></span>`;
    return html`
      <header class="title">
        ${icon("logo")}<span class="name">广联达BIM钢筋算量</span>
        <div class="slot">
          <div class="ime">
            <svg class="s" viewBox="0 0 26 28"><path d="M1 4q0-2 2-2L20 0q2 0 3 2l3 20q0 2-2 3L7 28q-2 0-3-2z" fill="#f0501e"></path><path d="M20 7C10 4 4 11 12 13.500s9 9-5 8" fill="none" stroke="#fff" stroke-width="4.500"></path></svg>
            <b>中</b>
            <svg viewBox="0 0 17 17"><circle cx="5" cy="6" r="2" fill="none" stroke="#1c6cc0" stroke-width="1.500"></circle><path d="M11 9h3c0 3-1 4-3 5" fill="none" stroke="#1c6cc0" stroke-width="1.800"></path></svg>
            <svg viewBox="0 0 17 17"><rect x="5.500" y="1" width="6" height="9" rx="3" fill="#1c6cc0"></rect><path d="M3 7c0 7 11 7 11 0M8.500 12v3M5 15.500h7" fill="none" stroke="#1c6cc0" stroke-width="1.500"></path></svg>
            <svg viewBox="0 0 17 17"><path d="M1 3.500h15v10H1z" fill="none" stroke="#1c6cc0" stroke-width="1.500"></path><path d="M3 6.500h11M3 8.500h11M5 11.500h7" stroke="#1c6cc0" stroke-dasharray="2 1"></path></svg>
            <svg viewBox="0 0 17 17"><circle cx="7" cy="4.500" r="3.500" fill="#b8c4d4"></circle><path d="M1 15c0-8 12-8 12 0z" fill="#b8c4d4"></path><path d="M8 10h8v6H8z" fill="#8ca0b8"></path></svg>
            <svg viewBox="0 0 17 17"><path d="M1 3l4-2c1 2 6 2 7 0l4 2-1 5-2-1v9H4V7L2 8z" fill="#1c6cc0"></path></svg>
            <svg viewBox="0 0 17 17"><path d="M2 15l7-7" stroke="#1c6cc0" stroke-width="3"></path><path d="M14 1l-3 3 2 2 3-3c1 5-3 7-7 6-2-4 1-8 5-8z" fill="#1c6cc0"></path></svg>
          </div>
        </div>
        <span class="path">istrator.PC-20141127NRHM\\Desktop\\白龙村-2016-08-25-13-27-07(2166版)_16G.GGJ12]</span>
        <button class="win" aria-label="最小化"><svg viewBox="0 0 12 12"><path d="M1 6.500h10" stroke="#000"></path></svg></button>
        <button class="win" aria-label="还原"><svg viewBox="0 0 12 12"><path d="M1.500 3.500h7v7h-7zM3.500 3V1.500h7v7H9" fill="none" stroke="#000"></path></svg></button>
        <button class="win" aria-label="关闭"><svg viewBox="0 0 12 12"><path d="M1 1l10 10M11 1L1 11" stroke="#000"></path></svg></button>
      </header>
      <svg class="badge" viewBox="0 0 54 26"><circle cx="27" cy="-6" r="26" fill="#ccc"></circle><circle cx="27" cy="-7" r="25" fill="#f4f4f4"></circle><circle cx="27" cy="-6" r="22.500" fill="#34c05a" stroke="#1f9a44"></circle><text x="27" y="11">69</text></svg>

      <nav class="menu">
        ${MENUS.map((m) => html`<button class="m">${m}</button>`)}
        <div class="row apps">${[T("doc", "新建变更", { drop: "split" }), T("bot", "广小二")].map(item)}</div>
        <div class="band bare"><span class="hot">三点定义斜板如何操作..</span></div>
        <div class="band bare fill">${[T("user", "13907298339", { drop: "split" }), { t: "造价豆:0" }, { i: "bell", label: "消息" }].map(item)}${more}</div>
      </nav>

      <div class="row r30">
        <div class="band bare quick">${QUICK.map(item)}${more}</div>
        <div class="band three main">${MAIN.map(item)}${more}</div>
        <div class="band two fill">${VIEW.map(item)}${more}</div>
      </div>

      <div class="mid">
        <module-nav></module-nav>
        <main class="work">
          <div class="row r28"><div class="band">${grip}${EDIT.map(item)}</div></div>
          <div class="row r28">
            <div class="band">${grip}${combo("楼层", "第4层", "short")}${combo("类型", "板")}${combo("构件类型", "板受力筋")}${combo("构件", "斜板 面")}${combo("分层", "分层板1")}${COMP.map(item)}</div>
            <div class="band">${grip}${AXIS.map(item)}</div>
          </div>
          <div class="row r29">
            <div class="band fill">${grip}${DRAW1.map(item)}${combo("绘制方式", "", "boxed")}${DRAW2.map(item)}${more}</div>
            <div class="band">${grip}<span class="end"></span><span class="end"></span></div>
          </div>
          <div class="stage">
            <cad-canvas></cad-canvas>
            <section class="panel">
              <h2>钢筋显示控制面板</h2>
              <div class="opts">${["温度筋", "显示其它图元", "显示详细公式"].map(check)}</div>
            </section>
          </div>
          <div class="row r32">
            <div class="band">${grip}${SNAP1.map(item)}</div>
            <div class="band">${grip}${SNAP2.map(item)}</div>
            <div class="band">${grip}${combo("偏移方式", "不偏移", "short")}
              <span class="sep"></span><label class="lab" for="X">X=</label>${num("X", "0")}<span class="unit">mm</span>
              <label class="lab" for="Y">Y=</label>${num("Y", "0")}<span class="unit">mm</span>
              <span class="sep"></span><label class="rot"><input type="checkbox" />旋转</label>${num("角度", "0.000", "wide")}<span class="lab">°</span>
            </div>
          </div>
        </main>
      </div>

      <footer class="status">
        <span class="w1">X=50155 Y=3213</span>
        <span class="w2">层高:2.8m</span>
        <span class="w3">底标高:10.27m</span>
        <span class="w4">2(32)</span>
        <span class="w5"></span>
        <span class="w6">211.2 FPS</span>
      </footer>
      <task-bar></task-bar>`;
  }
}
